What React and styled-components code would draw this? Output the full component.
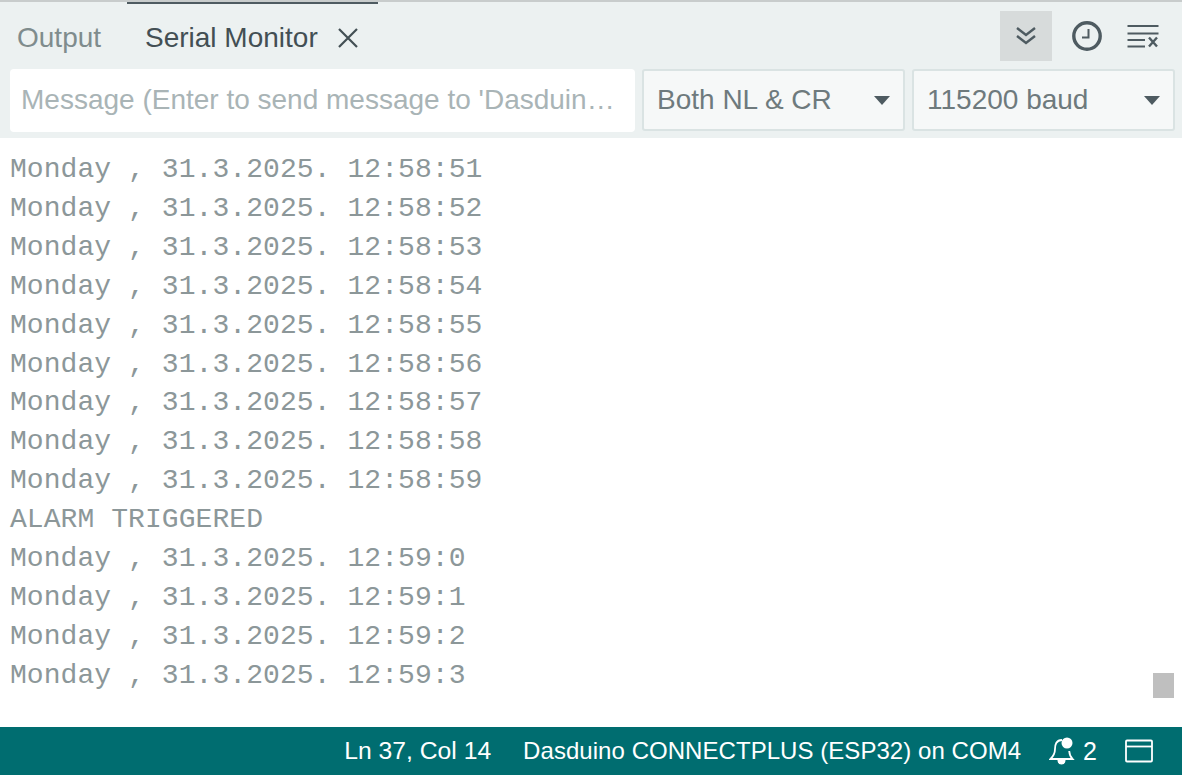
import React from "react";
import styled, { createGlobalStyle } from "styled-components";

const GlobalStyle = createGlobalStyle`
  html, body {
    margin: 0;
    padding: 0;
    background: #fff;
  }
  * { box-sizing: border-box; }
`;

const Page = styled.div`
  width: 1182px;
  height: 775px;
  display: flex;
  flex-direction: column;
  overflow: hidden;
  font-family: "Liberation Sans", Arial, sans-serif;
`;

const Header = styled.div`
  height: 138px;
  flex: none;
  background: #ecf1f1;
  border-top: 2px solid #c8cccc;
  display: flex;
  flex-direction: column;
`;

const TabBar = styled.div`
  height: 65px;
  display: flex;
  align-items: stretch;
  padding-left: 17px;
  padding-right: 23px;
`;

const Tab = styled.div`
  display: flex;
  align-items: center;
  gap: 19px;
  font-size: 28px;
  padding-top: 5px;
  color: ${(p) => (p.$active ? "#434f54" : "#7f8c8d")};
  border-top: 2px solid ${(p) => (p.$active ? "#4e5b61" : "transparent")};
  height: 65px;
`;

const OutputTab = styled(Tab)`
  width: 110px;
`;

const MonitorTab = styled(Tab)`
  width: 251px;
  padding-left: 18px;
`;

const Tools = styled.div`
  margin-left: auto;
  display: flex;
  align-items: center;
  gap: 20px;
  padding-top: 3px;
`;

const ToolButton = styled.div`
  width: 52px;
  height: 50px;
  display: flex;
  align-items: center;
  justify-content: center;
  background: ${(p) => (p.$on ? "#d7dbdb" : "transparent")};
`;

const PlainTool = styled.div`
  display: flex;
  align-items: center;
  justify-content: center;
  margin-left: ${(p) => p.$shift || 0}px;
`;

const Controls = styled.div`
  display: flex;
  gap: 7px;
  padding: 2px 7px 0 10px;
  height: 65px;
`;

const MessageBox = styled.div`
  width: 625px;
  height: 63px;
  background: #fff;
  border-radius: 4px;
  padding: 0 18px 2px 11px;
  display: flex;
  align-items: center;
  font-size: 28px;
  color: #a9b4b6;
`;

const MessageText = styled.span`
  white-space: nowrap;
  overflow: hidden;
  text-overflow: ellipsis;
`;

const Select = styled.div`
  width: 263px;
  height: 62px;
  background: #f6f8f8;
  border: 2px solid #dae3e3;
  border-radius: 3px;
  display: flex;
  align-items: center;
  justify-content: space-between;
  padding: 0 13px;
  font-size: 28px;
  color: #6e7a7d;
`;

const Caret = styled.span`
  width: 0;
  height: 0;
  border-left: 8px solid transparent;
  border-right: 8px solid transparent;
  border-top: 9px solid #4e5b61;
`;

const Console = styled.div`
  position: relative;
  flex: 1;
  background: #fff;
  padding: 13px 0 0 10px;
`;

const Line = styled.div`
  font-family: "Liberation Mono", "Courier New", monospace;
  font-size: 28px;
  letter-spacing: 0.07px;
  line-height: 38.92px;
  height: 38.92px;
  color: #8c9799;
  white-space: pre;
`;

const ScrollThumb = styled.div`
  position: absolute;
  left: 1153px;
  top: 535px;
  width: 21px;
  height: 25px;
  background: #bfbfbf;
`;

const StatusBar = styled.div`
  height: 48px;
  flex: none;
  background: #006d70;
  color: #fff;
  display: flex;
  align-items: center;
  justify-content: flex-end;
  padding-right: 29px;
  font-size: 25px;
`;

const LineInfo = styled.span`
  margin-right: 32px;
  white-space: nowrap;
  font-size: 24.7px;
`;

const BoardInfo = styled.span`
  margin-right: 28px;
  white-space: nowrap;
  font-size: 24px;
  letter-spacing: 0.05px;
`;

const Bell = styled.span`
  display: flex;
  align-items: center;
  gap: 8px;
  margin-right: 28px;
`;

const icon = { fill: "none", stroke: "#4e5b61" };

const lines = [
  "Monday , 31.3.2025. 12:58:51",
  "Monday , 31.3.2025. 12:58:52",
  "Monday , 31.3.2025. 12:58:53",
  "Monday , 31.3.2025. 12:58:54",
  "Monday , 31.3.2025. 12:58:55",
  "Monday , 31.3.2025. 12:58:56",
  "Monday , 31.3.2025. 12:58:57",
  "Monday , 31.3.2025. 12:58:58",
  "Monday , 31.3.2025. 12:58:59",
  "ALARM TRIGGERED",
  "Monday , 31.3.2025. 12:59:0",
  "Monday , 31.3.2025. 12:59:1",
  "Monday , 31.3.2025. 12:59:2",
  "Monday , 31.3.2025. 12:59:3",
];

export default function App() {
  return (
    <Page>
      <GlobalStyle />
      <Header>
        <TabBar>
          <OutputTab>Output</OutputTab>
          <MonitorTab $active>
            <span>Serial Monitor</span>
            <svg width="22" height="22" viewBox="0 0 22 22" {...icon} strokeWidth="2.2">
              <path d="M2 2 L20 20 M20 2 L2 20" stroke="#434f54" />
            </svg>
          </MonitorTab>
          <Tools>
            <ToolButton $on>
              <svg width="20" height="20" viewBox="0 0 20 20" {...icon} strokeWidth="2.4">
                <path d="M1 2 L10 9 L19 2 M1 10 L10 17 L19 10" />
              </svg>
            </ToolButton>
            <PlainTool>
              <svg width="30" height="30" viewBox="0 0 30 30" {...icon}>
                <circle cx="15" cy="15" r="13.2" strokeWidth="3.4" />
                <path d="M16.5 8 V16.5 H10" strokeWidth="2" />
              </svg>
            </PlainTool>
            <PlainTool $shift={5}>
              <svg width="32" height="24" viewBox="0 0 32 24" {...icon} strokeWidth="2">
                <path d="M0.5 2 H31.5 M0.5 9.5 H31.5 M0.5 16 H18 M0.5 22.5 H18" />
                <path d="M22 13.5 L30 22.5 M30 13.5 L22 22.5" strokeWidth="2.4" />
              </svg>
            </PlainTool>
          </Tools>
        </TabBar>
        <Controls>
          <MessageBox>
            <MessageText>Message (Enter to send message to 'Dasduino CONNECTPLUS (ESP32) on COM4')</MessageText>
          </MessageBox>
          <Select>
            <span>Both NL &amp; CR</span>
            <Caret />
          </Select>
          <Select>
            <span>115200 baud</span>
            <Caret />
          </Select>
        </Controls>
      </Header>
      <Console>
        {lines.map((line, i) => (
          <Line key={i}>{line}</Line>
        ))}
        <ScrollThumb />
      </Console>
      <StatusBar>
        <LineInfo>Ln 37, Col 14</LineInfo>
        <BoardInfo>Dasduino CONNECTPLUS (ESP32) on COM4</BoardInfo>
        <Bell>
          <svg width="26" height="28" viewBox="0 0 26 28" fill="none" stroke="#fff" strokeWidth="1.8">
            <path d="M13 3 C7 3 6 8 6 12 C6 17 4.5 19 1.5 22 H23.5 C21.5 20 20.5 18 20.2 14" />
            <path d="M9.5 24 C10 27.5 15 27.5 15.5 24 Z" fill="#fff" />
            <circle cx="18" cy="6" r="5.5" fill="#fff" stroke="none" />
          </svg>
          <span>2</span>
        </Bell>
        <svg width="28" height="24" viewBox="0 0 28 24" fill="none" stroke="#fff" strokeWidth="1.8">
          <rect x="1" y="1.5" width="26" height="21" rx="1" />
          <path d="M1 7.5 H27" />
        </svg>
      </StatusBar>
    </Page>
  );
}
